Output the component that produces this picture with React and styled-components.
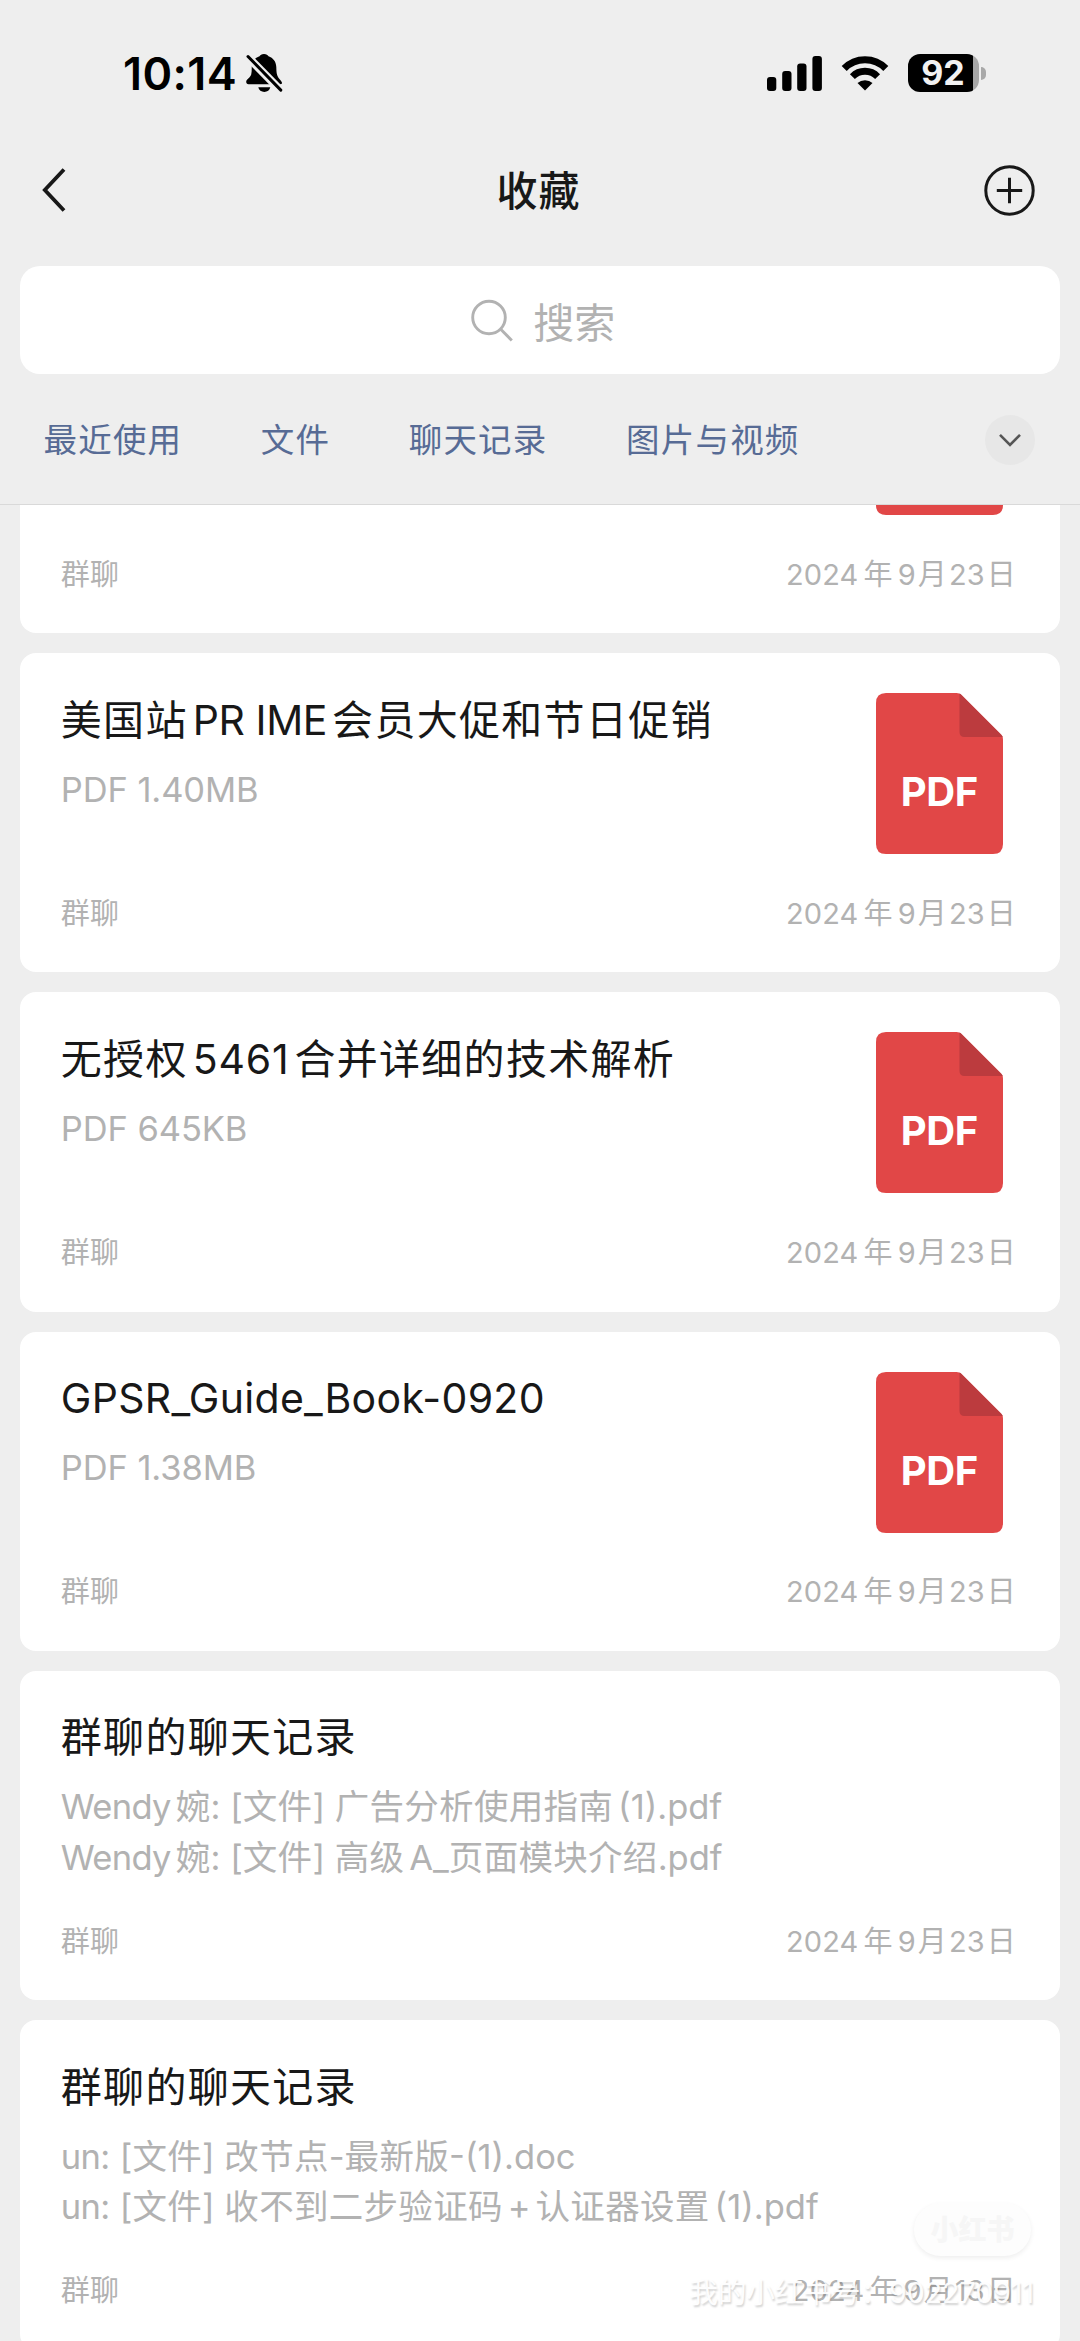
import React from 'react';
import styled, { createGlobalStyle } from 'styled-components';

const GlobalStyle = createGlobalStyle`
  * {
    box-sizing: border-box;
  }

  body {
    margin: 0;
    background-color: #eeeeee;
    font-family: "Inter", "Noto Sans CJK SC", sans-serif;
  }
`;

const Page = styled.div`
  position: relative;
  width: 1080px;
  height: 2341px;
  display: flex;
  flex-direction: column;
  overflow: hidden;
  background-color: #eeeeee;
`;

// 狀態列
const StatusBar = styled.div`
  height: 146px;
  padding: 0 94.5px 0 123px;
  display: flex;
  justify-content: space-between;
  align-items: center;
`;

const StatusGroup = styled.div`
  display: flex;
  align-items: center;
  gap: ${({ $gap }) => $gap}px;
`;

const Clock = styled.span`
  padding-top: 1px;
  font-size: 45px;
  font-weight: 600;
  letter-spacing: 0.4px;
  line-height: 50px;
  color: #000;
`;

const BatteryWrap = styled.div`
  display: flex;
  align-items: center;
  gap: 2px;
`;

const BatteryBody = styled.div`
  width: 71px;
  height: 38px;
  border-radius: 12px;
  padding-right: 1px;
  display: flex;
  align-items: center;
  justify-content: center;
  background: linear-gradient(to right, #000 92%, #a8a8a8 92%);
  color: #f2f2f2;
  font-size: 34px;
  font-weight: 700;
  line-height: 38px;
`;

const BatteryTip = styled.div`
  width: 4.5px;
  height: 13px;
  border-radius: 0 5px 5px 0;
  background-color: #a8a8a8;
`;

// 導覽列
const NavBar = styled.nav`
  height: 88px;
  padding: 0 45px 0 42px;
  display: flex;
  justify-content: space-between;
  align-items: center;
`;

const NavSide = styled.div`
  width: 52px;
  display: flex;
  justify-content: ${({ $end }) => ($end ? 'flex-end' : 'flex-start')};
`;

const NavTitle = styled.h1`
  margin: 0;
  padding-top: 2px;
  font-size: 41px;
  font-weight: 500;
  letter-spacing: 1px;
  line-height: 60px;
  color: #181818;
`;

const SearchBox = styled.div`
  height: 108px;
  margin: 32px 20px 0;
  padding-left: 6.5px;
  border-radius: 20px;
  display: flex;
  align-items: center;
  justify-content: center;
  gap: 20px;
  background-color: #fff;
`;

const Placeholder = styled.span`
  padding-top: 5px;
  color: #b2b2b2;
  font-size: 41px;
  line-height: 60px;
`;

// 分類標籤
const TabBar = styled.div`
  height: 131px;
  padding: 1px 45px 0 43.5px;
  display: flex;
  align-items: center;
  justify-content: space-between;
  border-bottom: 1px solid #d9d9d9;
`;

const TabList = styled.ul`
  margin: 0;
  padding: 0;
  display: flex;
  gap: 78.5px;
  list-style: none;
`;

const Tab = styled.li`
  font-size: 33.5px;
  letter-spacing: 1.2px;
  line-height: 50px;
  color: #576b95;
`;

const MoreButton = styled.div`
  width: 50px;
  height: 50px;
  border-radius: 50%;
  display: flex;
  align-items: center;
  justify-content: center;
  background-color: #e7e7e7;
`;

const ListViewport = styled.div`
  flex: 1;
  min-height: 0;
  overflow: hidden;
`;

// 列表已向上捲動，第一張卡片只露出底部
const List = styled.div`
  margin-top: -191px;
  padding: 0 20px;
  display: flex;
  flex-direction: column;
  gap: 20px;
`;

const Card = styled.div`
  flex: none;
  height: ${({ $tall }) => ($tall ? 329.5 : 319.2)}px;
  padding: 40px 44px 38.4px 40.8px;
  border-radius: 16px;
  display: flex;
  flex-direction: column;
  justify-content: space-between;
  background-color: #fff;
`;

const CardBody = styled.div`
  display: flex;
  justify-content: space-between;
  padding-right: 13px;
`;

const CardInfo = styled.div`
  display: flex;
  flex-direction: column;
  gap: 20px;
  padding-top: 1.5px;
  white-space: pre;
`;

const CardTitle = styled.div`
  min-height: 50px;
  font-size: 41px;
  letter-spacing: 1.3px;
  line-height: 50px;
  color: #181818;
`;

const CardDetail = styled.div`
  font-size: 34.5px;
  letter-spacing: 0.3px;
  line-height: 50.3px;
  color: #b2b2b2;
`;

const Latin = styled.span`
  letter-spacing: ${({ $spacing }) => $spacing}px;
  margin-left: ${({ $before }) => ($before ? 5 : 0)}px;
  margin-right: ${({ $after }) => ($after ? 5 : 0)}px;
`;

const CardFooter = styled.div`
  display: flex;
  justify-content: space-between;
  font-size: 29px;
  letter-spacing: 0.15px;
  line-height: 40px;
  color: #b2b2b2;
`;

const DatePart = styled.span`
  margin: 0 ${({ $gap }) => $gap}px;

  &:last-child {
    margin-right: 0;
  }
`;

// 浮水印
const Badge = styled.div`
  position: absolute;
  right: 49px;
  bottom: 85px;
  width: 117px;
  height: 53px;
  border-radius: 27px;
  display: flex;
  align-items: center;
  justify-content: center;
  background-color: #fdfdfd;
  box-shadow: 0 2px 5px rgba(0, 0, 0, 0.07);
  color: #f6f6f6;
  font-size: 28px;
  font-weight: 900;
  line-height: 40px;
`;

const Watermark = styled.div`
  position: absolute;
  right: 46px;
  bottom: 28px;
  font-size: 28.5px;
  line-height: 40px;
  color: rgba(255, 255, 255, 0.95);
  text-shadow: 1px 1.5px 2px rgba(0, 0, 0, 0.18);
  white-space: nowrap;
`;

const HAN = /([\u4e00-\u9fff]+)/;

// 中文與英數字之間留出間距
function MixedText({ text, spacing = 0 }) {
  const runs = text.split(HAN).filter(Boolean);
  return runs.map((run, i) =>
    HAN.test(run) ? (
      <React.Fragment key={i}>{run}</React.Fragment>
    ) : (
      <Latin
        key={i}
        $spacing={spacing}
        $before={i > 0 && /^[\w(+]/.test(run)}
        $after={i < runs.length - 1 && /[A-Za-z0-9+]$/.test(run)}
      >
        {run}
      </Latin>
    )
  );
}

function DateLabel({ date }) {
  const [year, month, day] = date;
  return (
    <span>
      {year}
      <DatePart $gap={5}>年</DatePart>
      {month}
      <DatePart $gap={2}>月</DatePart>
      {day}
      <DatePart $gap={2}>日</DatePart>
    </span>
  );
}

const MutedBell = () => (
  <svg width="38" height="40" viewBox="0 0 38 40">
    <path d="M19 1C21.4 1 22.9 2 23.5 3.3C28.1 4.9 31.1 8.500 31.3 14C31.5 19.5 31.5 22 34 25.5C36.5 28.5 37 29 37 30C37 30.9 36.2 31.2 35 31.2H3.5C2 31.2 1.2 30.2 1.2 28.7C1.3 26.3 5 25 6.200 21.5C7.2 17.500 6.2 14 7.2 10.5C8.1 7.1 10.8 4.500 14.5 3.3C15.1 2 16.6 1 19 1Z" />
    <path d="M13.3 34.2h12c-.6 2.9-3 4.7-6 4.7s-5.4-1.8-6-4.7z" />
    <path d="M0 1l38 38.8" stroke="#eeeeee" strokeWidth="8" />
    <path d="M3 3.5l32.8 33.6" stroke="#000" strokeWidth="3" strokeLinecap="round" />
  </svg>
);

const Signal = () => (
  <svg width="55" height="36" viewBox="0 0 55 36">
    <rect x="0" y="22" width="9.3" height="14" rx="3" />
    <rect x="15.2" y="16" width="9.3" height="20" rx="3" />
    <rect x="30.2" y="8.5" width="9.3" height="27.5" rx="3" />
    <rect x="45.4" y="1" width="9.5" height="35" rx="3" />
  </svg>
);

const Wifi = () => (
  <svg width="48" height="36" viewBox="0 0 48 36">
    <path d="M3.2 13.5A29 29 0 0 1 44.8 13.5" fill="none" stroke="#000" strokeWidth="7" />
    <path d="M11.4 21.6A17.5 17.5 0 0 1 36.6 21.6" fill="none" stroke="#000" strokeWidth="6.8" />
    <path d="M24 35.6L16.5 28.1A11 11 0 0 1 31.5 28.1Z" />
  </svg>
);

const BackIcon = () => (
  <svg width="24" height="44" viewBox="0 0 24 44" fill="none" stroke="#181818" strokeWidth="3.8">
    <path d="M22 1.5L2.8 22L22 42.5" />
  </svg>
);

const AddIcon = () => (
  <svg width="51" height="51" viewBox="0 0 51 51" fill="none" stroke="#181818" strokeWidth="3">
    <circle cx="25.5" cy="25.5" r="23.7" />
    <path d="M25.5 12.8v25.4M12.8 25.5h25.4" />
  </svg>
);

const SearchIcon = () => (
  <svg width="42" height="43" viewBox="0 0 42 43" fill="none" stroke="#b2b2b2" strokeWidth="2.9">
    <circle cx="18" cy="18.5" r="16.3" />
    <path d="M29.5 30L40.8 41.5" />
  </svg>
);

const ChevronIcon = () => (
  <svg width="24" height="14" viewBox="0 0 24 14" fill="none" stroke="#555" strokeWidth="2.6">
    <path d="M2 1.8L12 12L22 1.8" />
  </svg>
);

const PdfIcon = () => (
  <svg width="127" height="161" viewBox="0 0 127 161">
    <path
      fill="#e14747"
      d="M10 0H80.5Q83.5 0 85.5 2L125 41.5Q127 43.5 127 46.5V151Q127 161 117 161H10Q0 161 0 151V10Q0 0 10 0Z"
    />
    <path fill="#bc3b3e" d="M83.5 .6Q84.6 1.1 85.5 2L125 41.5Q126.3 42.8 126.8 44H88.5Q83.5 44 83.5 39Z" />
    <text x="63.3" y="112.6" fill="#fff" fontSize="40" fontWeight="700" textAnchor="middle" letterSpacing="-0.4">
      PDF
    </text>
  </svg>
);

const tabs = ['最近使用', '文件', '聊天记录', '图片与视频'];

const records = [
  { pdf: true, title: '', details: [], date: [2024, 9, 23] },
  { pdf: true, title: '美国站PR IME会员大促和节日促销', spacing: -0.4, details: ['PDF 1.40MB'], date: [2024, 9, 23] },
  { pdf: true, title: '无授权5461合并详细的技术解析', spacing: 0.8, details: ['PDF 645KB'], date: [2024, 9, 23] },
  { pdf: true, title: 'GPSR_Guide_Book-0920', spacing: 0.3, details: ['PDF 1.38MB'], date: [2024, 9, 23] },
  {
    title: '群聊的聊天记录',
    sender: 'Wendy婉',
    details: ['[文件] 广告分析使用指南(1).pdf', '[文件] 高级A_页面模块介绍.pdf'],
    date: [2024, 9, 23],
  },
  {
    title: '群聊的聊天记录',
    sender: 'un',
    details: ['[文件] 改节点-最新版-(1).doc', '[文件] 收不到二步验证码+认证器设置(1).pdf'],
    date: [2024, 9, 13],
  },
];

function RecordCard({ record }) {
  const { pdf, title, spacing, sender, details, date } = record;
  return (
    <Card $tall={!pdf}>
      <CardBody>
        <CardInfo>
          <CardTitle>
            <MixedText text={title} spacing={spacing} />
          </CardTitle>
          <div>
            {details.map((line) => (
              <CardDetail key={line}>
                {sender && <MixedText text={sender} spacing={-0.7} />}
                <MixedText text={sender ? `: ${line}` : line} spacing={sender ? 0 : -0.1} />
              </CardDetail>
            ))}
          </div>
        </CardInfo>
        {pdf && <PdfIcon />}
      </CardBody>
      <CardFooter>
        <span>群聊</span>
        <DateLabel date={date} />
      </CardFooter>
    </Card>
  );
}

function App() {
  return (
    <Page>
      <GlobalStyle />
      <StatusBar>
        <StatusGroup $gap={8}>
          <Clock>10:14</Clock>
          <MutedBell />
        </StatusGroup>
        <StatusGroup $gap={19}>
          <Signal />
          <Wifi />
          <BatteryWrap>
            <BatteryBody>92</BatteryBody>
            <BatteryTip />
          </BatteryWrap>
        </StatusGroup>
      </StatusBar>
      <NavBar>
        <NavSide>
          <BackIcon />
        </NavSide>
        <NavTitle>收藏</NavTitle>
        <NavSide $end>
          <AddIcon />
        </NavSide>
      </NavBar>
      <SearchBox>
        <SearchIcon />
        <Placeholder>搜索</Placeholder>
      </SearchBox>
      <TabBar>
        <TabList>
          {tabs.map((tab) => (
            <Tab key={tab}>{tab}</Tab>
          ))}
        </TabList>
        <MoreButton>
          <ChevronIcon />
        </MoreButton>
      </TabBar>
      <ListViewport>
        <List>
          {records.map((record, i) => (
            <RecordCard key={i} record={record} />
          ))}
        </List>
      </ListViewport>
      <Badge>小红书</Badge>
      <Watermark>我的小红书号：902270911</Watermark>
    </Page>
  );
}

export default App;
